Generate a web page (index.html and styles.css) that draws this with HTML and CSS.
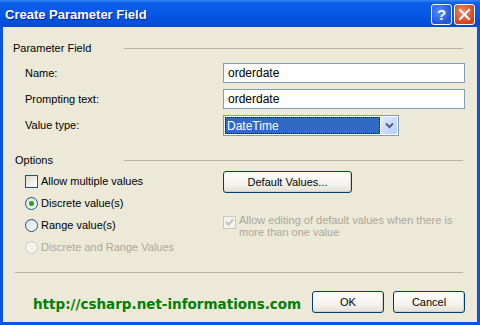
FILE: index.html
```html
<!DOCTYPE html>
<html lang="en">
<head>
  <meta charset="UTF-8" />
  <title>Create Parameter Field</title>
  <link rel="stylesheet" href="styles.css">
</head>
<body>

<div class="window">
  <!-- Title bar -->
  <div class="titlebar">
    <span class="title">Create Parameter Field</span>
    <div class="caption-buttons">
      <span class="cap-btn help">?</span>
      <span class="cap-btn close">
        <svg width="13" height="13" viewBox="0 0 13 13"><path d="M2 2 L11 11 M11 2 L2 11" stroke="#fff" stroke-width="2.2" stroke-linecap="square"/></svg>
      </span>
    </div>
  </div>

  <div class="client">
    <div class="group-head"><span class="group-label">Parameter Field</span><i class="rule"></i></div>

    <div class="field-grid">
      <label>Name:</label>
      <div class="textbox">orderdate</div>
      <label>Prompting text:</label>
      <div class="textbox">orderdate</div>
      <label>Value type:</label>
      <div class="combo">
        <span class="combo-value"><span class="focus">DateTime</span></span>
        <span class="combo-arrow">
          <svg width="9" height="7" viewBox="0 0 9 7"><path d="M1 1.5 L4.5 5 L8 1.5" fill="none" stroke="#4d6185" stroke-width="2"/></svg>
        </span>
      </div>
    </div>

    <div class="group-head options-head"><span class="group-label">Options</span><i class="rule"></i></div>

    <div class="options">
      <div class="opt-col">
        <div class="opt-row"><span class="check"></span>Allow multiple values</div>
        <div class="opt-row"><span class="radio on"></span>Discrete value(s)</div>
        <div class="opt-row"><span class="radio"></span>Range value(s)</div>
        <div class="opt-row disabled"><span class="radio"></span>Discrete and Range Values</div>
      </div>
      <div class="opt-col right">
        <button class="xp-btn default-btn">Default Values...</button>
        <div class="edit-row disabled">
          <span class="check checked">
            <svg width="9" height="9" viewBox="0 0 9 9"><path d="M1 4 L3.5 6.5 L8 1.5" fill="none" stroke="#c4c2b4" stroke-width="2"/></svg>
          </span>
          <span>Allow editing of default values when there is<br>more than one value</span>
        </div>
      </div>
    </div>

    <i class="bottom-rule"></i>

    <div class="footer">
      <span class="url">http://csharp.net-informations.com</span>
      <div class="footer-buttons">
        <button class="xp-btn">OK</button>
        <button class="xp-btn">Cancel</button>
      </div>
    </div>
  </div>
</div>

</body>
</html>
```

FILE: styles.css
```css
body {
  margin: 0;
  font-family: 'Liberation Sans', Arial, sans-serif;
  font-size: 11px;
  color: #000;
  background: #ece9d8;
}

.window {
  width: 480px;
  height: 325px;
  box-sizing: border-box;
  display: flex;
  flex-direction: column;
  background: #0a55df;
}

.titlebar {
  height: 27px;
  flex: none;
  display: flex;
  align-items: center;
  justify-content: space-between;
  padding: 0 5px 0 5px;
  background: linear-gradient(#3a86f7 0, #0c5fe8 3px, #0557e6 55%, #0349d4 100%);
}

.title {
  color: #fff;
  font-weight: bold;
  font-size: 13px;
  text-shadow: 1px 1px 0 #0a1e8c;
  padding-top: 1px;
}

.caption-buttons {
  display: flex;
  gap: 2px;
  padding-top: 1px;
}

.cap-btn {
  width: 19px;
  height: 19px;
  border: 1px solid #fff;
  border-radius: 3px;
  display: flex;
  align-items: center;
  justify-content: center;
  color: #fff;
  font-weight: bold;
  font-size: 15px;
}

.help {
  background: radial-gradient(circle at 40% 35%, #5a8ef8, #2356e0 70%);
}

.close {
  background: radial-gradient(circle at 40% 35%, #f08a5e, #d8421c 70%);
}

.client {
  flex: 1;
  margin: 0 3px 3px 3px;
  background: #ece9d8;
  padding: 14px 12px 0 10px;
  display: flex;
  flex-direction: column;
}

.group-head {
  display: flex;
  align-items: center;
  height: 13px;
  padding-right: 2px;
}

.group-label {
  width: 111px;
  flex: none;
}

.rule {
  flex: 1;
  height: 1px;
  background: #b5b2a4;
  margin-top: 1px;
}

.field-grid {
  display: grid;
  grid-template-columns: 198px 242px;
  grid-auto-rows: 20px;
  row-gap: 6px;
  align-items: center;
  margin: 9px 0 0 12px;
}

.textbox, .combo {
  height: 20px;
  box-sizing: border-box;
  border: 1px solid #7f9db9;
  background: #fff;
  display: flex;
  align-items: center;
  padding-left: 4px;
  font-size: 12px;
}

.combo {
  width: 176px;
  height: 21px;
  padding: 1px;
  margin-top: 1px;
}

.combo-value {
  flex: 1;
  height: 100%;
  background: #316ac5;
  color: #fff;
  display: flex;
  box-sizing: border-box;
  border: 1px dotted #111;
}

.focus {
  padding-left: 1px;
  line-height: 17px;
}

.combo-arrow {
  width: 16px;
  height: 100%;
  margin-left: 1px;
  background: linear-gradient(135deg, #dfe8fe, #bacdfa);
  border-radius: 2px;
  display: flex;
  align-items: center;
  justify-content: center;
}

.options-head {
  margin-top: 18px;
  padding-left: 2px;
}

.options-head .group-label {
  width: 109px;
}

.options {
  display: grid;
  grid-template-columns: 198px 1fr;
  margin: 4px 0 0 12px;
}

.opt-row {
  height: 22px;
  display: flex;
  align-items: center;
  gap: 3px;
}

.disabled {
  color: #aca899;
}

.check {
  width: 13px;
  height: 13px;
  box-sizing: border-box;
  border: 1px solid #1c5180;
  background: linear-gradient(135deg, #dcdcd5, #fff);
  flex: none;
  display: flex;
  align-items: center;
  justify-content: center;
}

.radio {
  width: 13px;
  height: 13px;
  box-sizing: border-box;
  border: 1px solid #1c5180;
  border-radius: 50%;
  background: linear-gradient(135deg, #dcdcd5, #fff);
  flex: none;
  display: flex;
  align-items: center;
  justify-content: center;
}

.radio.on::after {
  content: "";
  width: 5px;
  height: 5px;
  border-radius: 50%;
  background: #21a121;
}

.disabled .radio, .disabled .check {
  border-color: #cac8bb;
  background: #f4f3ee;
}

.right {
  display: flex;
  flex-direction: column;
  align-items: flex-start;
}

.xp-btn {
  font-family: inherit;
  font-size: 11px;
  color: #000;
  height: 22px;
  border: 1px solid #003c74;
  border-radius: 3px;
  background: linear-gradient(#fff 0, #f4f3ee 60%, #e3e0d3 100%);
  box-shadow: inset -1px -1px 0 #d6d0c5;
  padding: 0;
}

.default-btn {
  width: 129px;
  margin-top: 1px;
}

.edit-row {
  display: flex;
  gap: 3px;
  margin-top: 21px;
  line-height: 12px;
}

.edit-row .check {
  margin-top: 2px;
}

.bottom-rule {
  display: block;
  height: 1px;
  background: #b5b2a4;
  margin: 14px 2px 0 2px;
}

.footer {
  display: flex;
  align-items: center;
  justify-content: space-between;
  margin-top: 18px;
  padding-left: 20px;
}

.url {
  font-family: 'DejaVu Sans', Verdana, sans-serif;
  font-weight: bold;
  font-size: 13.5px;
  color: #008000;
  margin-top: 3px;
}

.footer-buttons {
  display: flex;
  gap: 9px;
}

.footer-buttons .xp-btn {
  width: 72px;
}
```
